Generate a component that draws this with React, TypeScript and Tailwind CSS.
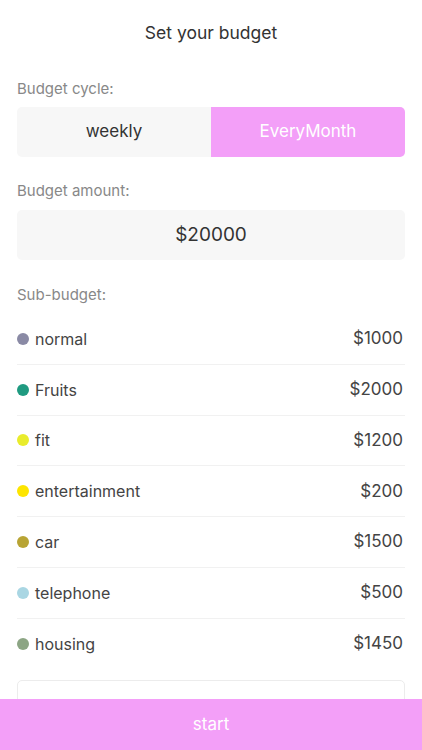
import React from 'react';

const subBudgets = [
  { name: 'normal', amount: '$1000', color: '#8a8aa5' },
  { name: 'Fruits', amount: '$2000', color: '#1f9a80' },
  { name: 'fit', amount: '$1200', color: '#e9ec2c' },
  { name: 'entertainment', amount: '$200', color: '#fde500' },
  { name: 'car', amount: '$1500', color: '#b8a434' },
  { name: 'telephone', amount: '$500', color: '#a9d6e3' },
  { name: 'housing', amount: '$1450', color: '#8ca584' },
];

export default function App() {
  return (
    <div
      className="relative h-[750px] w-[422px] overflow-hidden bg-white text-[#333]"
      style={{ fontFamily: 'Inter, "Noto Sans", sans-serif' }}
    >
      <div className="flex h-[66px] items-center justify-center text-[17.5px] text-[#333]">
        Set your budget
      </div>

      <div className="px-[17px]">
        <div className="mt-[13px] h-[20px] text-[15px] leading-[20px] text-[#888]">Budget cycle:</div>
        <div className="mt-[8px] flex h-[50px] overflow-hidden rounded-[5px]">
          <button className="flex flex-1 items-center justify-center bg-[#f7f7f7] text-[17px] text-[#333]">
            weekly
          </button>
          <button className="flex flex-1 items-center justify-center bg-[#f39ff8] text-[17px] text-white">
            EveryMonth
          </button>
        </div>

        <div className="mt-[24px] h-[20px] text-[15px] leading-[20px] text-[#888]">Budget amount:</div>
        <div className="mt-[9px] flex h-[50px] items-center justify-center rounded-[5px] bg-[#f7f7f7] text-[19px] text-[#333]">
          $20000
        </div>

        <div className="mt-[25px] h-[20px] text-[15px] leading-[20px] text-[#888]">Sub-budget:</div>
        <div className="mt-[9px]">
          {subBudgets.map((s, i) => (
            <div
              key={s.name}
              className={
                'flex h-[50.8px] items-center justify-between pr-[2px] ' +
                (i < subBudgets.length - 1 ? 'border-b border-[#f1f1f1]' : '')
              }
            >
              <div className="flex items-center gap-[6px]">
                <span className="h-[12px] w-[12px] rounded-full" style={{ backgroundColor: s.color }} />
                <span className="text-[16px] text-[#444]">{s.name}</span>
              </div>
              <span className="text-[17px] text-[#444]">{s.amount}</span>
            </div>
          ))}
        </div>

        <div className="mt-[10px] flex h-[50px] items-center justify-center rounded-[5px] border border-[#ececec] text-[16px] text-[#c78bd0]">
          Add sub-budget
        </div>
      </div>

      <button className="absolute bottom-0 left-0 flex h-[51px] w-full items-center justify-center bg-[#f39ff8] text-[17px] text-white">
        start
      </button>
    </div>
  );
}
